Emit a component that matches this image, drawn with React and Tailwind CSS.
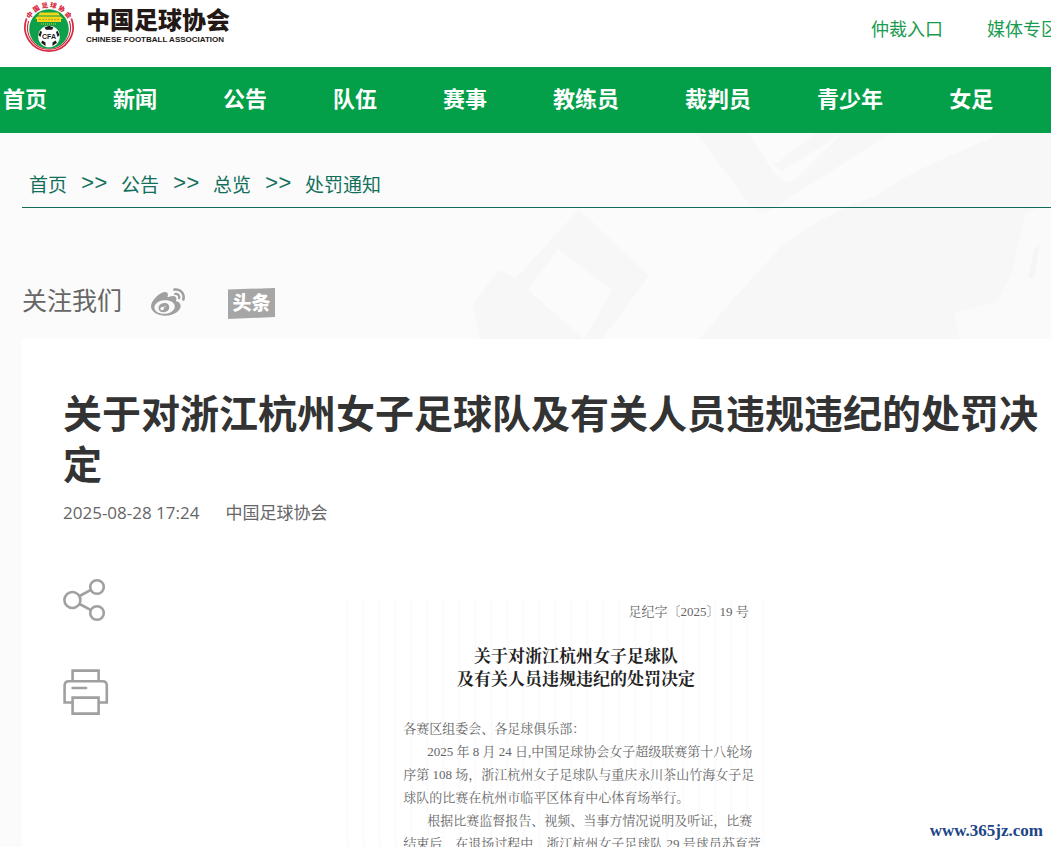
import { FaWeibo } from "react-icons/fa";

const navItems = [
    "首页",
    "新闻",
    "公告",
    "队伍",
    "赛事",
    "教练员",
    "裁判员",
    "青少年",
    "女足",
];

const crumbs = ["首页", "公告", "总览", "处罚通知"];

const noticeLines = [
    { text: "各赛区组委会、各足球俱乐部：" },
    { text: "2025 年 8 月 24 日,中国足球协会女子超级联赛第十八轮场", indent: true },
    { text: "序第 108 场，浙江杭州女子足球队与重庆永川茶山竹海女子足" },
    { text: "球队的比赛在杭州市临平区体育中心体育场举行。" },
    { text: "根据比赛监督报告、视频、当事方情况说明及听证，比赛", indent: true },
    { text: "结束后，在退场过程中，浙江杭州女子足球队 29 号球员苏育萱" },
];

function Emblem() {
    return (
        <svg width="52" height="54" viewBox="0 0 52 54" aria-hidden="true">
            <defs>
                <path id="emblemArc" d="M4.5 29 A21.5 21.5 0 0 1 47.5 29" />
            </defs>
            <path
                d="M3.6 18.5 A24 24 0 1 0 48.4 18.5"
                fill="none"
                stroke="#d7263d"
                strokeWidth="1.7"
            />
            <path
                d="M5.6 21 A21.5 21.5 0 1 0 46.4 21"
                fill="none"
                stroke="#d7263d"
                strokeWidth="1.1"
            />
            <circle cx="26" cy="29" r="19.8" fill="#0d9f49" />
            <text
                fill="#d7263d"
                fontSize="6.5"
                fontWeight="900"
                className="font-['Noto_Sans_CJK_SC',sans-serif]"
            >
                <textPath href="#emblemArc" startOffset="50%" textAnchor="middle">
                    中 国 足 球 协 会
                </textPath>
            </text>
            <path
                d="M17 12.5 H35 L37 15.5 H15 Z M14 16.5 H38 L40 19 H12 Z M14 19 H38 V22 H14 Z"
                fill="#f3d51b"
            />
            <path d="M16 19.5 H36" stroke="#b8a51c" strokeWidth="1" strokeDasharray="2 1" />
            <path d="M18 24 H34" stroke="#f3d51b" strokeWidth="1.2" strokeDasharray="1 1" />
            <circle cx="26" cy="36.5" r="10.8" fill="#fff" />
            <path
                d="M21.5 27.5 L26 25.8 L30.5 27.5 L29 29.8 H23 Z M15.4 35 L17.6 30.8 L19 32 L17.4 37 Z M36.6 35 L34.4 30.8 L33 32 L34.6 37 Z M18 42.8 L19.5 40.5 L22.5 42.5 L22.5 46 Z M34 42.8 L32.5 40.5 L29.5 42.5 L29.5 46 Z"
                fill="#1c1c1c"
            />
            <text
                x="26"
                y="39"
                fill="#1c1c1c"
                fontSize="7"
                fontWeight="700"
                textAnchor="middle"
                className="font-['Liberation_Sans',sans-serif]"
            >
                CFA
            </text>
        </svg>
    );
}

function Backdrop() {
    return (
        <svg
            className="absolute top-0 right-0 -z-10"
            width="601"
            height="206"
            viewBox="0 0 601 206"
            aria-hidden="true"
        >
            <g fill="#f7f7f7">
                <path d="M246 0 H298 L324 40 L336 50 L346 46 L392 0 H440 L326 74 L312 80 L300 72 Z" />
                <path d="M324 32 L366 0 H392 L332 38 Z" />
                <path d="M552 0 H601 V206 H250 L284 165 L310 137 L332 112 L362 92 L400 72 L424 64 L466 38 Z" />
                <path d="M129 76 L199 143 L152 206 H30 L23 172 L48 137 L66 145 Z M108 116 L78 157 L134 206 L162 157 Z" fillRule="evenodd" />
            </g>
            <path d="M575 80 L601 70 V206 H510 L504 180 L548 168 L562 140 Z" fill="#fafafa" />
            <path d="M590 112 L584 145 L578 145 L584 116 Z" fill="#f5f5f5" />
        </svg>
    );
}

function ShareIcon() {
    return (
        <svg width="46" height="44" viewBox="0 0 46 44" fill="none" stroke="#a0a0a0" strokeWidth="2.6">
            <circle cx="9.4" cy="22" r="8" />
            <circle cx="34" cy="9" r="6.8" />
            <circle cx="34" cy="35" r="6.8" />
            <path d="M16.6 18 L28 11.8 M16.6 26 L28 32.2" />
        </svg>
    );
}

function PrintIcon() {
    return (
        <svg width="46" height="48" viewBox="0 0 46 48" fill="none" stroke="#a0a0a0" strokeWidth="2.6">
            <path d="M9.6 13.5 V2.6 H35.6 V13.5" />
            <path d="M9.6 34.5 H1.6 V17.5 Q1.6 13.2 5.8 13.2 H39.6 Q43.8 13.2 43.8 17.5 V34.5 H35.6" />
            <path d="M9.6 29.6 H35.6 V45.6 H9.6 Z" />
            <path d="M9.6 20 H23" strokeLinecap="round" />
        </svg>
    );
}

export default function App() {

    return (
        <div className="relative flex h-screen flex-col overflow-hidden bg-[#fbfbfb] font-['Open_Sans','Noto_Sans_CJK_SC',sans-serif]">

            <header className="flex h-[67px] shrink-0 items-start justify-between bg-white pl-[23px]">

                <a href="#" className="flex items-start gap-[11px] text-[#231815]">
                    <Emblem />
                    <span className="flex flex-col pt-1">
                        <span className="text-[24px] leading-8 font-black">
                            中国足球协会
                        </span>
                        <span className="font-['Liberation_Sans',sans-serif] text-[8px] leading-2 font-bold whitespace-nowrap">
                            CHINESE FOOTBALL ASSOCIATION
                        </span>
                    </span>
                </a>

                <div className="-mr-2 flex gap-11 pt-[15px] text-[18px] leading-7 whitespace-nowrap text-[#1a9c50]">
                    <a href="#">仲裁入口</a>
                    <a href="#">媒体专区</a>
                </div>

            </header>

            <nav className="flex h-[66px] shrink-0 items-center gap-[66px] overflow-hidden bg-[#039f49] pb-1 pl-[3px] text-[22px] font-bold whitespace-nowrap text-white">
                {navItems.map((item) => (
                    <a key={item} href="#">
                        {item}
                    </a>
                ))}
            </nav>

            <main className="relative isolate flex grow flex-col pl-[22px]">

                <Backdrop />

                <div className="flex h-[75px] shrink-0 items-end gap-[14px] border-b border-[#0f6b55] pb-2 pl-[7px] text-[19px] leading-7 text-[#12705a]">
                    {crumbs.map((crumb, i) => (
                        <span key={crumb} className="flex gap-[14px]">
                            {i > 0 && (
                                <span className="w-[26px] font-['Liberation_Mono',monospace] text-[22px]">
                                    &gt;&gt;
                                </span>
                            )}
                            <a href="#">{crumb}</a>
                        </span>
                    ))}
                </div>

                <div className="flex h-[131px] shrink-0 items-end pb-[19px]">
                    <span className="text-[25px] leading-10 text-[#666666]">
                        关注我们
                    </span>
                    <a href="#" aria-label="微博" className="ml-[29px] text-[#a0a0a0]">
                        <FaWeibo className="size-[34px]" />
                    </a>
                    <a href="#" className="ml-[43px]">
                        <svg width="47" height="32" viewBox="0 0 47 32">
                            <path d="M0 1.5 L47 0 V29 L0 31 Z" fill="#a6a6a6" />
                            <text
                                x="23.5"
                                y="22"
                                fill="#fff"
                                fontSize="19"
                                fontWeight="900"
                                textAnchor="middle"
                                className="font-['Noto_Sans_CJK_SC',sans-serif]"
                            >
                                头条
                            </text>
                        </svg>
                    </a>
                </div>

                <article className="grow bg-white pt-12 pl-[41px]">

                    <h1 className="pr-3 text-[39px] leading-[51px] font-bold text-[#333333]">
                        关于对浙江杭州女子足球队及有关人员违规违纪的处罚决定
                    </h1>

                    <div className="mt-3 flex gap-[26px] text-[17px] leading-6 text-[#666666]">
                        <time>2025-08-28 17:24</time>
                        <span>中国足球协会</span>
                    </div>

                    <div className="mt-[53px] flex items-start">

                        <div className="flex flex-col gap-[46px]">
                            <button type="button" aria-label="分享">
                                <ShareIcon />
                            </button>
                            <button type="button" aria-label="打印">
                                <PrintIcon />
                            </button>
                        </div>

                        <section className="flex grow justify-center pt-[22px] pr-9 font-['Liberation_Serif','Noto_Serif_CJK_SC','Noto_Sans_CJK_SC',serif] text-[13px] leading-[23px] whitespace-nowrap text-[#666666]">
                            <div className="bg-[repeating-linear-gradient(90deg,#fcfcfc_0px,#fcfcfc_3px,#ffffff_3px,#ffffff_16px)] pr-[17px] pl-[57px]">
                                <p className="pr-3 text-right">
                                    足纪字〔2025〕19 号
                                </p>
                                <h2 className="mt-[22px] pr-3 text-center text-[17px] font-bold text-[#222222]">
                                    关于对浙江杭州女子足球队
                                    <br />
                                    及有关人员违规违纪的处罚决定
                                </h2>
                                <div className="mt-[26px]">
                                    {noticeLines.map((line) => (
                                        <p
                                            key={line.text}
                                            className={line.indent ? "pl-6" : ""}
                                        >
                                            {line.text}
                                        </p>
                                    ))}
                                </div>
                            </div>
                        </section>

                    </div>

                </article>

            </main>

            <a
                href="#"
                className="absolute right-2 bottom-1 font-['Liberation_Serif',serif] text-[17px] leading-6 font-bold text-[#1c4587]"
            >
                www.365jz.com
            </a>

        </div>
    );
}
